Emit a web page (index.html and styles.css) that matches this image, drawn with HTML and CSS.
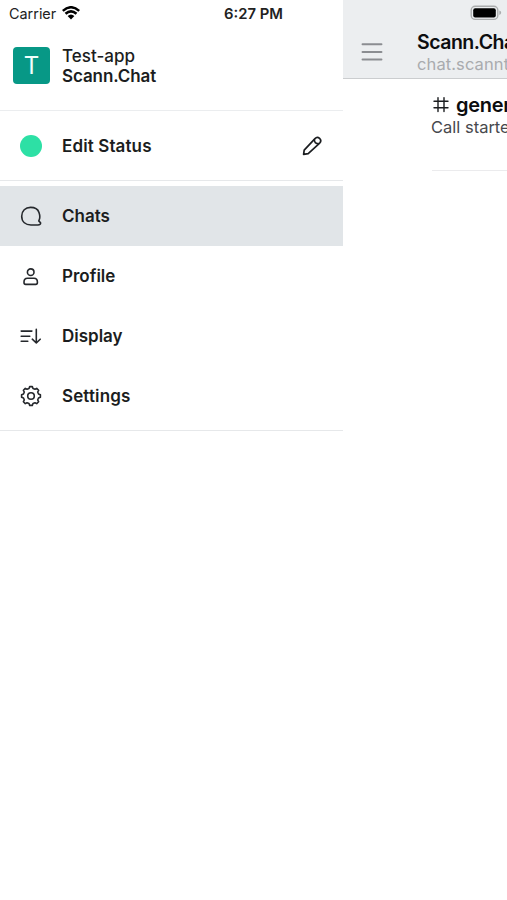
FILE: index.html
```html
<!DOCTYPE html>
<html lang="en">

<head>
	<meta charset="utf-8">
	<title>Scann.Chat</title>
	<link rel="stylesheet" href="styles.css">
</head>
<body>
	<div class="sidebar">
		<div class="statusbar">
			<span class="carrier">Carrier</span>
			<svg class="wifi" width="18" height="14" viewBox="0 0 18 14">
				<path d="M.8 4.9Q9-2.4 17.2 4.9M3.5 7.8Q9 2.9 14.5 7.8" fill="none" stroke="#000" stroke-width="2.5"/>
				<path d="M5.6 10Q9 6.8 12.4 10L9 13.6Z"/>
			</svg>
			<span class="time">6:27 PM</span>
		</div>

		<div class="server">
			<div class="logo">T</div>
			<div class="server-text">
				<div class="server-name">Test-app</div>
				<div class="user-name">Scann.Chat</div>
			</div>
		</div>

		<div class="item status">
			<span class="icon"><span class="dot"></span></span>
			<span class="label">Edit Status</span>
			<svg class="edit" width="22" height="22" viewBox="0 0 22 22">
				<path d="M2.6 19.4L3.2 15.2L14 3.6A3.2 3.2 0 0 1 18.7 8L7.2 18.6Z"/>
				<path d="M13.4 4.4Q13 8.6 17.8 8.7"/>
			</svg>
		</div>

		<div class="menu">
			<div class="item active">
				<svg class="icon" viewBox="-12 -12 24 24">
					<path d="M7.8 4.8C8.8 3 9-.8 8-3.6C6.8-7 3.5-8.6-.4-8.6C-5.6-8.6-9.3-5.2-9.3 .3C-9.3 5.8-5.4 9 0 9H7C8.6 9 9.8 8.2 9.6 7C9.4 6 8.3 5.8 7.8 4.8Z"/>
				</svg>
				<span class="label">Chats</span>
			</div>
			<div class="item">
				<svg class="icon" viewBox="-12 -12 24 24">
					<circle cx="-.3" cy="-3.8" r="3.3"/>
					<path d="M-3.6 2.2H3Q6.4 2.2 6.4 6V6.6Q6.4 8.4 4.8 8.4H-5.4Q-7 8.4-7 6.6V6Q-7 2.2-3.6 2.2Z"/>
				</svg>
				<span class="label">Profile</span>
			</div>
			<div class="item">
				<svg class="icon" viewBox="-12 -12 24 24">
					<path d="M-9.8-4.9H.9M-9.8 .2H-1.2M-9.8 5.3H-3.2M5.3-6.6V6.8M1.3 3.2L5.3 7L9.2 3.2"/>
				</svg>
				<span class="label">Display</span>
			</div>
			<div class="item">
				<svg class="icon" viewBox="-12 -12 24 24">
					<path d="M-1.3-9.4H1.3L2-7.5L4-6.7L5.7-7.6L7.6-5.7L6.7-4L7.5-2L9.4-1.3V1.3L7.5 2L6.7 4L7.6 5.7L5.7 7.6L4 6.7L2 7.5L1.3 9.4H-1.3L-2 7.5L-4 6.7L-5.7 7.6L-7.6 5.7L-6.7 4L-7.5 2L-9.4 1.3V-1.3L-7.5-2L-6.7-4L-7.6-5.7L-5.7-7.6L-4-6.7L-2-7.5Z"/>
					<circle cx="0" cy="0" r="3.3"/>
				</svg>
				<span class="label wide">Settings</span>
			</div>
		</div>
	</div>

	<div class="content">
		<div class="header">
			<div class="battery-row">
				<svg width="32" height="16" viewBox="0 0 32 16">
					<rect x="1.2" y="1.2" width="26.6" height="13.2" rx="4" fill="#eceef0" stroke="#aaacad" stroke-width="1.4"/>
					<rect x="3.2" y="3.2" width="22.6" height="9.4" rx="2"/>
					<path d="M29.3 5.6Q31.2 6.2 31.2 7.8T29.3 10Z" fill="#aaacad"/>
				</svg>
			</div>
			<div class="title-row">
				<svg class="burger" width="22" height="20" viewBox="0 0 22 20">
					<path d="M1.5 2.2H20.5M1.5 10H20.5M1.5 17.5H20.5"/>
				</svg>
				<div class="titles">
					<div class="title">Scann.Chat</div>
					<div class="subtitle">chat.scanntech.com</div>
				</div>
			</div>
		</div>
		<div class="channel">
			<div class="channel-name">
				<svg class="hash" width="18" height="18" viewBox="0 0 18 18">
					<path d="M6 1.6V15.6M12 1.6V15.6M2 5.2H16M2 11.8H16"/>
				</svg>
				<span>general</span>
			</div>
			<div class="message">Call started by</div>
		</div>
	</div>
</body>
</html>
```

FILE: styles.css
```css
body{
	margin: 0;
	height: 900px;
	display: flex;
	overflow: hidden;
	background-color: #fff;
	color: #1b1d20;
	font-family: Inter, "Liberation Sans", sans-serif;
}

svg{
	display: block;
	flex: none;
}

.sidebar{
	width: 343px;
	flex: none;
}

.statusbar{
	display: flex;
	align-items: center;
	height: 28px;
	padding-left: 9px;
	font-size: 14px;
	color: #222;
}

.carrier{
	width: 53px;
	margin-top: -1px;
	font-size: 14.4px;
}

.wifi{
	margin-top: -3px;
}

.time{
	margin-left: 144px;
	font-weight: 600;
	font-size: 14.8px;
	white-space: nowrap;
}

.server{
	display: flex;
	height: 75px;
	padding: 0 13px;
	align-items: center;
	padding-bottom: 7px;
	border-bottom: 1px solid #ebedef;
}

.logo{
	width: 37px;
	height: 37px;
	margin-right: 12px;
	border-radius: 4px;
	background-color: #079886;
	color: #effffc;
	font-size: 24px;
	line-height: 37px;
	text-align: center;
}

.server-text{
	font-size: 17px;
	line-height: 20px;
}

.server-name{
	font-weight: 500;
}

.user-name{
	font-weight: 600;
	letter-spacing: -0.1px;
}

.item{
	display: flex;
	align-items: center;
	height: 60px;
	padding: 0 20px 0 19px;
}

.status{
	height: 69px;
	border-bottom: 1px solid #e6e8ea;
}

.icon{
	width: 24px;
	height: 24px;
	margin-right: 19px;
	fill: none;
	stroke: #25282c;
	stroke-width: 1.6;
	stroke-linecap: round;
	stroke-linejoin: round;
}

.dot{
	display: block;
	width: 22px;
	height: 22px;
	margin: 1px;
	border-radius: 50%;
	background-color: #2de0a5;
}

.label{
	flex: 1;
	font-size: 17px;
	font-weight: 600;
}

.status .label,
.wide{
	letter-spacing: 0.12px;
}

.edit{
	fill: none;
	stroke: #1b1d20;
	stroke-width: 1.7;
	stroke-linejoin: round;
}

.menu{
	padding-top: 5px;
	padding-bottom: 4px;
	border-bottom: 1px solid #e6e8ea;
}

.active{
	background-color: #e1e5e8;
}

.content{
	flex: 1;
	min-width: 0;
	overflow: hidden;
	white-space: nowrap;
}

.header{
	height: 78px;
	background-color: #eceef0;
	border-bottom: 1px solid #cbcdcf;
}

.battery-row{
	padding: 5px 0 0 127px;
	height: 23px;
}

.title-row{
	display: flex;
}

.burger{
	margin: 14px 34px 0 18px;
	fill: none;
	stroke: #8b8d91;
	stroke-width: 1.9;
	stroke-linecap: round;
}

.title{
	font-size: 19.5px;
	font-weight: 600;
	line-height: 28px;
	letter-spacing: -0.5px;
	color: #0c0d0f;
}

.subtitle{
	font-size: 16.5px;
	line-height: 16px;
	letter-spacing: 0.1px;
	color: #a9abae;
}

.channel{
	height: 76px;
	margin-left: 89px;
	padding-top: 15px;
	border-bottom: 1px solid #ebebed;
}

.channel-name{
	display: flex;
	align-items: center;
	height: 22px;
	gap: 6px;
	font-size: 20px;
	font-weight: 600;
	letter-spacing: -0.3px;
	color: #0c0d0f;
}

.hash{
	fill: none;
	stroke: #1b1d20;
	stroke-width: 1.4;
	stroke-linecap: round;
}

.message{
	margin-left: -1px;
	font-size: 16.5px;
	line-height: 22px;
	color: #47494d;
}
```
